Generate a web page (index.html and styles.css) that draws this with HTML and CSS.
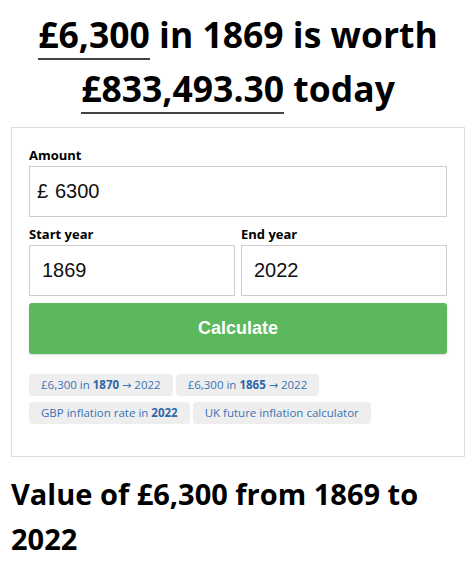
FILE: index.html
```html
<!DOCTYPE html>
<html lang="en">
<head>
<meta charset="utf-8">
<title>Inflation calculator</title>
<link rel="stylesheet" href="styles.css">
</head>
<body>
<main class="page">
  <h1 class="headline"><span class="hl">£6,300</span> in 1869 is worth <span class="hl">£833,493.30</span> today</h1>

  <form class="card">
    <div class="field">
      <label class="label">Amount</label>
      <div class="box amount">
        <span class="currency">£</span>
        <span class="value">6300</span>
      </div>
    </div>
    <div class="row">
      <div class="field">
        <label class="label">Start year</label>
        <div class="box"><span class="value">1869</span></div>
      </div>
      <div class="field">
        <label class="label">End year</label>
        <div class="box"><span class="value">2022</span></div>
      </div>
    </div>
    <button type="button" class="btn">Calculate</button>

    <div class="chips">
      <a class="chip">£6,300 in <b>1870</b> <span class="arrow">→</span> 2022</a>
      <a class="chip">£6,300 in <b>1865</b> <span class="arrow">→</span> 2022</a>
      <a class="chip">GBP inflation rate in <b>2022</b></a>
      <a class="chip">UK future inflation calculator</a>
    </div>
  </form>

  <h2 class="subhead">Value of £6,300 from 1869 to 2022</h2>
</main>
</body>
</html>
```

FILE: styles.css
```css
html, body {
  margin: 0;
  padding: 0;
  background: #fff;
}

body {
  font-family: "Open Sans", "Noto Sans", sans-serif;
  color: #000;
}

.page {
  padding: 7px 8px 0 11px;
}

.headline {
  margin: 0;
  font-size: 35.5px;
  line-height: 54px;
  font-weight: 700;
  text-align: center;
}

.hl {
  border-bottom: 2px solid #444;
}

.card {
  margin-top: 12px;
  border: 1px solid #ddd;
  padding: 18px 17px 32px 17px;
  display: flex;
  flex-direction: column;
}

.field {
  display: flex;
  flex-direction: column;
  min-width: 0;
}

.label {
  font-size: 13px;
  font-weight: 700;
  line-height: 19px;
  margin-bottom: 1px;
}

.box {
  height: 51px;
  box-sizing: border-box;
  border: 1px solid #ccc;
  display: flex;
  align-items: center;
  padding: 0 12px;
  font-family: "Liberation Sans", Arial, sans-serif;
  font-size: 20px;
  color: #111;
}

.amount {
  padding-left: 7px;
  margin-bottom: 8px;
}

.currency {
  width: 18px;
}

.row {
  display: grid;
  grid-template-columns: 1fr 1fr;
  gap: 6px;
}

.btn {
  margin-top: 7px;
  height: 51px;
  border: 0;
  border-radius: 3px;
  background: #5cb85c;
  color: #fff;
  font-family: "Liberation Sans", Arial, sans-serif;
  font-weight: 700;
  font-size: 18px;
  box-shadow: 0 1px 2px rgba(0, 0, 0, 0.15);
}

.chips {
  margin-top: 20px;
  display: flex;
  flex-wrap: wrap;
  gap: 6px 3px;
}

.chip {
  background: #eee;
  border-radius: 4px;
  padding: 0 12px;
  height: 22px;
  line-height: 22px;
  font-size: 11.5px;
  color: #3a73b5;
}

.chip b {
  font-weight: 700;
  color: #2f67a8;
}

.arrow {
  font-family: "DejaVu Sans", sans-serif;
  font-size: 11px;
}

.subhead {
  margin: 14px 0 0 0;
  font-size: 29px;
  line-height: 45px;
  font-weight: 700;
}
```
